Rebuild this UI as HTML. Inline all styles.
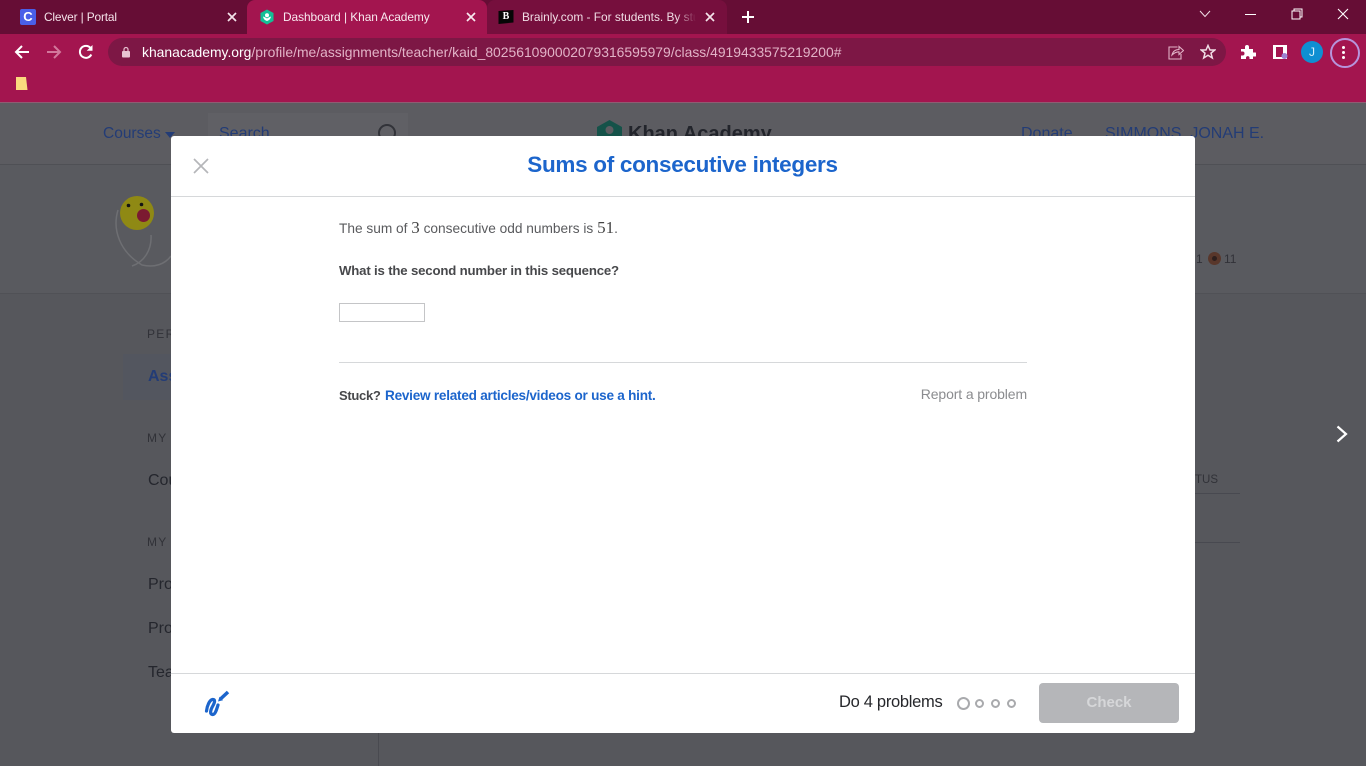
<!DOCTYPE html>
<html lang="en">
<head>
<meta charset="utf-8">
<title>Dashboard | Khan Academy</title>
<style>
html,body{margin:0;padding:0;width:1366px;height:766px;overflow:hidden;background:#56575c;font-family:"Liberation Sans",sans-serif}
div,span,svg{position:absolute}
.t{white-space:nowrap}
b{font-weight:bold}
</style>
</head>
<body>
<!-- Browser chrome -->
<div style="left:0;top:0;width:1366px;height:34px;background:#660d35"></div>
<div style="left:0;top:34px;width:1366px;height:68px;background:#a3154f"></div>
<div style="left:0;top:102px;width:1366px;height:1px;background:#8f5c72"></div>
<!-- tabs -->
<div style="left:247px;top:0;width:240px;height:34px;background:#a3154f;border-radius:8px 8px 0 0"></div>
<div style="left:487px;top:0;width:240px;height:34px;background:#760f3d;border-radius:8px 8px 0 0"></div>

<div style="left:20px;top:9px;width:16px;height:16px;background:#4a5fe8;border-radius:2px"></div>
<div class="t" style="left:20px;top:9px;width:16px;height:16px;line-height:16px;text-align:center;color:#fff;font-size:13px;font-weight:bold">C</div>
<div class="t" style="left:44px;top:9px;font-size:11.9px;letter-spacing:-0.15px;line-height:16px;color:#f4e3ea">Clever | Portal</div>
<svg style="left:227px;top:12px" width="10" height="10" viewBox="0 0 10 10"><path d="M1 1L9 9M9 1L1 9" stroke="#f4e3ea" stroke-width="1.7"/></svg>

<svg style="left:259px;top:9px" width="16" height="16" viewBox="0 0 16 16"><path d="M8 0.5L14.5 4V12L8 15.5L1.5 12V4Z" fill="#14bf96"/><circle cx="8" cy="6.2" r="2" fill="#fff"/><path d="M4 7.5C4.5 10.5 6.5 11.5 8 12C9.5 11.5 11.5 10.5 12 7.5C10 8 9 9 8 9.5C7 9 6 8 4 7.5Z" fill="#fff"/></svg>
<div class="t" style="left:283px;top:9px;font-size:11.9px;letter-spacing:-0.05px;line-height:16px;color:#f8e9ef">Dashboard | Khan Academy</div>
<svg style="left:466px;top:12px" width="10" height="10" viewBox="0 0 10 10"><path d="M1 1L9 9M9 1L1 9" stroke="#f8e9ef" stroke-width="1.7"/></svg>

<svg style="left:498px;top:9px" width="16" height="16" viewBox="0 0 16 16"><path d="M0.5 2L15.5 1V13.5L0.5 15Z" fill="#060606"/></svg>
<div class="t" style="left:498px;top:9px;width:16px;height:16px;line-height:16px;text-align:center;color:#fff;font-size:10px;font-weight:bold;font-family:'Liberation Serif',serif">B</div>
<div class="t" style="left:522px;top:9px;width:174px;overflow:hidden;font-size:11.9px;line-height:16px;color:#f0dde5">Brainly.com - For students. By students.</div>
<div style="left:676px;top:9px;width:20px;height:16px;background:linear-gradient(90deg,rgba(118,15,61,0),#760f3d)"></div>
<svg style="left:705px;top:12px" width="10" height="10" viewBox="0 0 10 10"><path d="M1 1L9 9M9 1L1 9" stroke="#f4e3ea" stroke-width="1.7"/></svg>
<svg style="left:741px;top:10px" width="14" height="14" viewBox="0 0 14 14"><path d="M7 1V13M1 7H13" stroke="#fff" stroke-width="2"/></svg>

<!-- window controls -->
<svg style="left:1199px;top:10px" width="12" height="8" viewBox="0 0 12 8"><path d="M1 1L6 6.5L11 1" stroke="#f0dde5" stroke-width="1" fill="none"/></svg>
<div style="left:1245px;top:14px;width:11px;height:1px;background:#fff"></div>
<svg style="left:1291px;top:8px" width="12" height="12" viewBox="0 0 12 12"><path d="M3 3V1H11V9H9" stroke="#fff" fill="none"/><rect x="1" y="3" width="8" height="8" stroke="#fff" fill="none"/></svg>
<svg style="left:1337px;top:8px" width="12" height="12" viewBox="0 0 12 12"><path d="M1 1L11 11M11 1L1 11" stroke="#fff" stroke-width="1.1"/></svg>

<!-- nav -->
<svg style="left:14px;top:44px" width="16" height="16" viewBox="0 0 16 16"><path d="M15 8H2M8 2L2 8L8 14" stroke="#fff" stroke-width="2" fill="none"/></svg>
<svg style="left:46px;top:44px" width="16" height="16" viewBox="0 0 16 16"><path d="M1 8H14M8 2L14 8L8 14" stroke="#d2789c" stroke-width="2" fill="none"/></svg>
<svg style="left:78px;top:44px" width="16" height="16" viewBox="0 0 16 16"><path d="M13.3 10.5A6 6 0 1 1 12.5 4" stroke="#fff" stroke-width="2" fill="none"/><path d="M14.5 1V6.8H8.7Z" fill="#fff"/></svg>
<div style="left:108px;top:38px;width:1118px;height:28px;background:#7d1745;border-radius:14px"></div>
<svg style="left:121px;top:46px" width="10" height="12" viewBox="0 0 10 12"><rect x="1" y="5" width="8" height="6.5" rx="1" fill="#e8c3d2"/><path d="M3 5.5V3.5a2 2 0 0 1 4 0V5.5" stroke="#e8c3d2" stroke-width="1.2" fill="none"/></svg>
<div class="t" style="left:142px;top:44px;font-size:13.9px;line-height:16px;color:#e2b3c7"><span style="position:static;color:#fff">khanacademy.org</span>/profile/me/assignments/teacher/kaid_802561090002079316595979/class/4919433575219200#</div>
<svg style="left:1168px;top:44px" width="16" height="16" viewBox="0 0 16 16"><path d="M9.5 3H1V15H13V10" stroke="#e2b3c7" stroke-width="1.1" fill="none"/><path d="M4 11C5 7 8 5.5 11 5.5V2.5L15.5 6.5L11 10.5V7.8C8 7.8 6 9 4 11Z" stroke="#e2b3c7" stroke-width="1.1" fill="none"/></svg>
<svg style="left:1200px;top:44px" width="16" height="16" viewBox="0 0 16 16"><path d="M8 1.5L10 6H14.8L11 9.2L12.3 14L8 11.3L3.7 14L5 9.2L1.2 6H6Z" stroke="#f0dde5" stroke-width="1.5" fill="none"/></svg>
<svg style="left:1240px;top:44px" width="16" height="16" viewBox="0 0 16 16"><path d="M1 5H5V3a2 2 0 0 1 4 0V5H13V8.5H15a2 2 0 0 1 0 4H13V15H9.5V13.5a1.8 1.8 0 0 0-3.5 0V15H1V11.5H2.5a2 2 0 0 0 0-4H1Z" fill="#fff"/></svg>
<svg style="left:1272px;top:44px" width="16" height="16" viewBox="0 0 16 16"><rect x="1" y="1" width="14" height="14" fill="#fff"/><rect x="4" y="3" width="7" height="10" fill="#a3154f"/><circle cx="12.5" cy="12" r="3" fill="#9d80d0"/></svg>
<div style="left:1301px;top:41px;width:22px;height:22px;border-radius:50%;background:#0f8fd2"></div>
<div class="t" style="left:1301px;top:41px;width:22px;height:22px;line-height:22px;text-align:center;color:#d9f0fb;font-size:12px">J</div>
<div style="left:1330px;top:38px;width:26px;height:26px;border:2px solid #b794dc;border-radius:50%"></div>
<div style="left:1342px;top:46px;width:3px;height:3px;background:#fff;border-radius:50%"></div>
<div style="left:1342px;top:51px;width:3px;height:3px;background:#fff;border-radius:50%"></div>
<div style="left:1342px;top:56px;width:3px;height:3px;background:#fff;border-radius:50%"></div>

<!-- bookmark -->
<svg style="left:16px;top:77px" width="12" height="14" viewBox="0 0 12 14"><path d="M0 0H10L11.5 13H0Z" fill="#fbd97e"/></svg>

<!-- Dimmed page -->
<div style="left:0;top:103px;width:1366px;height:663px;background:#56575c"></div>
<div style="left:0;top:103px;width:1366px;height:61px;background:#5c5c61"></div>
<div style="left:0;top:164px;width:1366px;height:1px;background:#4f5055"></div>
<div style="left:0;top:165px;width:1366px;height:128px;background:#595a5f"></div>
<div style="left:0;top:293px;width:1366px;height:1px;background:#505156"></div>
<div class="t" style="left:103px;top:124px;font-size:15.5px;line-height:20px;color:#233c76">Courses</div>
<div style="left:165px;top:132px;width:0;height:0;border-left:5px solid transparent;border-right:5px solid transparent;border-top:6px solid #233c76"></div>
<div style="left:208px;top:113px;width:200px;height:40px;background:#606065"></div>
<div class="t" style="left:219px;top:124px;font-size:16px;line-height:20px;color:#233c76">Search</div>
<div style="left:378px;top:124px;width:14px;height:14px;border:2px solid #323339;border-radius:50%"></div>
<svg style="left:596px;top:120px" width="27" height="20" viewBox="0 0 27 20"><path d="M13.5 0L26 7V20H1V7Z" fill="#155249"/><circle cx="13.5" cy="10" r="4" fill="#5c5c61"/></svg>
<div class="t" style="left:628px;top:122px;font-size:20px;line-height:24px;font-weight:bold;color:#22242b">Khan Academy</div>
<div class="t" style="left:1021px;top:124px;font-size:16px;line-height:20px;color:#233c76">Donate</div>
<div class="t" style="left:1105px;top:124px;font-size:16px;line-height:20px;color:#233c76">SIMMONS, JONAH E.</div>

<!-- avatar -->
<svg style="left:110px;top:190px" width="62" height="80" viewBox="0 0 62 80"><path d="M8 20C2 40 10 62 32 75C45 78 55 74 61 66M22 76C34 72 42 60 41 45" stroke="#6e6f73" stroke-width="1.5" fill="none"/><circle cx="27" cy="23" r="17" fill="#8f8914"/><circle cx="33.500" cy="25.500" r="6.500" fill="#7b1a31"/><circle cx="18.500" cy="15.500" r="1.800" fill="#141414"/><circle cx="31.500" cy="14.500" r="1.800" fill="#141414"/></svg>

<!-- sidebar -->
<div class="t" style="left:147px;top:327px;font-size:12px;line-height:15px;letter-spacing:1.3px;color:#313238">PERSONAL</div>
<div style="left:123px;top:354px;width:60px;height:46px;background:#53565f"></div>
<div class="t" style="left:148px;top:367px;font-size:16px;line-height:20px;font-weight:bold;color:#233c76">Assignments</div>
<div class="t" style="left:147px;top:431px;font-size:12px;line-height:15px;letter-spacing:1.3px;color:#313238">MY STUFF</div>
<div class="t" style="left:148px;top:471px;font-size:16px;line-height:20px;color:#24262d">Courses</div>
<div class="t" style="left:147px;top:535px;font-size:12px;line-height:15px;letter-spacing:1.3px;color:#313238">MY ACCOUNT</div>
<div class="t" style="left:148px;top:575px;font-size:16px;line-height:20px;color:#24262d">Progress</div>
<div class="t" style="left:148px;top:619px;font-size:16px;line-height:20px;color:#24262d">Profile</div>
<div class="t" style="left:148px;top:663px;font-size:16px;line-height:20px;color:#24262d">Teachers</div>
<div style="left:378px;top:733px;width:1px;height:33px;background:#494a50"></div>

<!-- right side remnants -->
<div class="t" style="left:1196px;top:252px;font-size:12px;line-height:14px;color:#313238">1</div>
<div style="left:1208px;top:252px;width:13px;height:13px;border-radius:50%;background:#59372b"></div>
<div style="left:1212px;top:256px;width:5px;height:5px;border-radius:50%;background:#2e201e"></div>
<div class="t" style="left:1224px;top:252px;font-size:12px;line-height:14px;color:#313238">11</div>
<div class="t" style="left:1195px;top:473px;font-size:11.500px;line-height:14px;color:#313238">TUS</div>
<div style="left:1195px;top:493px;width:45px;height:1px;background:#484950"></div>
<div style="left:1195px;top:542px;width:45px;height:1px;background:#484950"></div>
<svg style="left:1335px;top:425px" width="14" height="18" viewBox="0 0 14 18"><path d="M2.500 1.500L11 9L2.500 16.500" stroke="#fff" stroke-width="2.200" fill="none"/></svg>

<!-- Modal -->
<div style="left:171px;top:136px;width:1024px;height:597px;background:#fff;border-radius:3px"></div>
<div style="left:171px;top:196px;width:1024px;height:1px;background:#d6d8da"></div>
<div style="left:171px;top:673px;width:1024px;height:1px;background:#d6d8da"></div>
<svg style="left:193px;top:158px" width="16" height="16" viewBox="0 0 16 16"><path d="M1 1L15 15M15 1L1 15" stroke="#b5b6b9" stroke-width="1.700"/></svg>
<div class="t" style="left:171px;top:150px;width:1024px;text-align:center;font-size:22.500px;line-height:30px;font-weight:bold;color:#1c65cc;letter-spacing:-0.3px;text-indent:-1px">Sums of consecutive integers</div>

<div class="t" style="left:339px;top:219px;font-size:13.700px;line-height:18px;color:#5a5b5e">The sum of <span style="position:static;font-family:'Liberation Serif',serif;font-size:17px;color:#444">3</span> consecutive odd numbers is <span style="position:static;font-family:'Liberation Serif',serif;font-size:17px;color:#444">51</span>.</div>
<div class="t" style="left:339px;top:261.500px;font-size:13.200px;letter-spacing:-0.170px;line-height:18px;font-weight:bold;color:#47484b">What is the second number in this sequence?</div>
<div style="left:339px;top:303px;width:84px;height:17px;border:1px solid #c4c5c7;background:#fff"></div>
<div style="left:339px;top:362px;width:688px;height:1px;background:#d6d8da"></div>
<div class="t" style="left:339px;top:387px;font-size:13px;line-height:18px;font-weight:bold;color:#47484b;letter-spacing:-0.300px">Stuck?</div>
<div class="t" style="left:385px;top:387px;font-size:13.600px;line-height:18px;font-weight:bold;color:#1c65cc;letter-spacing:-0.250px">Review related articles/videos or use a hint.</div>
<div class="t" style="right:339px;top:385px;font-size:14px;line-height:18px;color:#8b8c8f;letter-spacing:-0.120px">Report a problem</div>

<!-- Footer -->
<svg style="left:203px;top:689px" width="28" height="28" viewBox="0 0 28 28"><path d="M18 9.500L25 3" stroke="#1c65cc" stroke-width="3.500"/><path d="M15 12.500L16.500 7.800L20 11.200Z" fill="#1c65cc"/><path d="M3.500 22C4 17 6.500 11 9.500 10.500C13 10 11.500 14 9.500 17.500C7.500 21 6.500 25 9.500 25.500C12 26 13.500 21 15 16" stroke="#1c65cc" stroke-width="3.200" fill="none" stroke-linecap="round"/></svg>
<div class="t" style="left:839px;top:692px;font-size:16.500px;line-height:20px;color:#26272b;letter-spacing:-0.300px">Do 4 problems</div>
<div style="left:957px;top:697px;width:9px;height:9px;border:2px solid #a9aaad;border-radius:50%"></div>
<div style="left:975px;top:699px;width:5px;height:5px;border:2px solid #a9aaad;border-radius:50%"></div>
<div style="left:991px;top:699px;width:5px;height:5px;border:2px solid #a9aaad;border-radius:50%"></div>
<div style="left:1007px;top:699px;width:5px;height:5px;border:2px solid #a9aaad;border-radius:50%"></div>
<div style="left:1039px;top:683px;width:140px;height:40px;background:#b5b6b9;border-radius:4px"></div>
<div class="t" style="left:1039px;top:683px;width:140px;height:40px;line-height:39px;text-align:center;font-size:15px;font-weight:bold;color:#d6d7d9">Check</div>
</body>
</html>
